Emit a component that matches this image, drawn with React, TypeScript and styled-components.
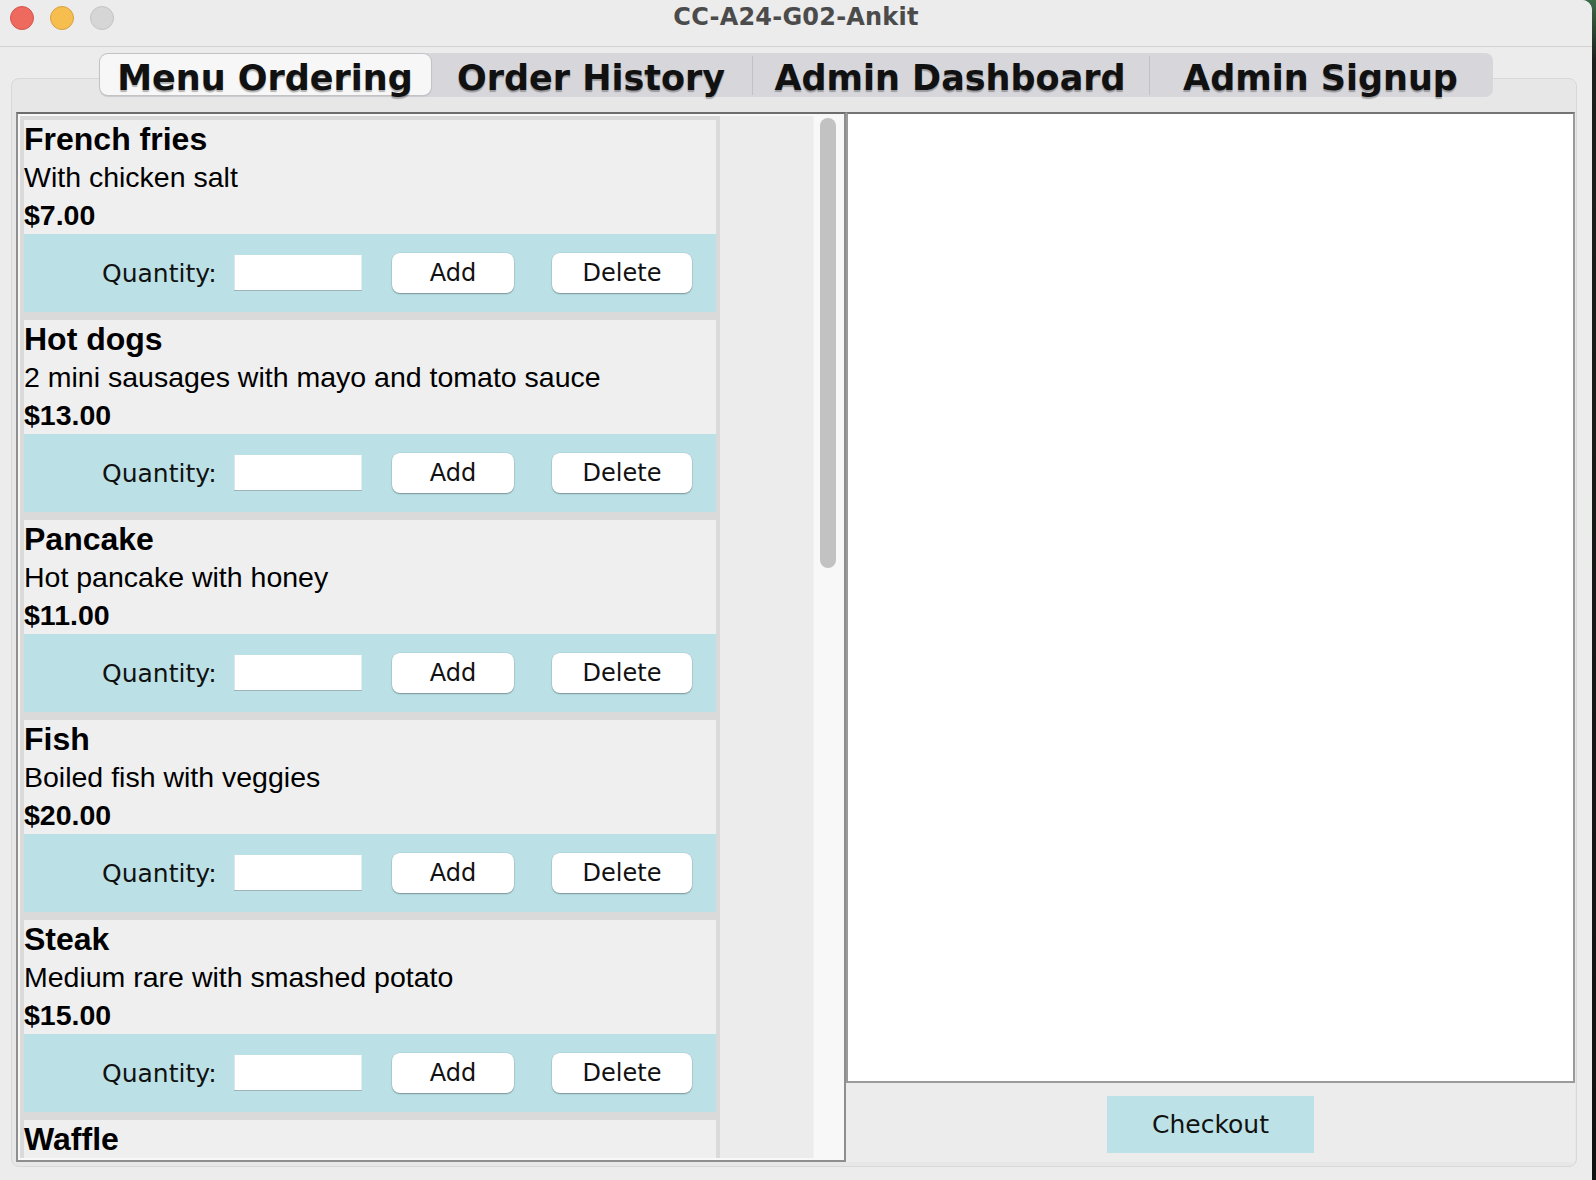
import React from "react";
import styled, { createGlobalStyle } from "styled-components";

const GlobalStyle = createGlobalStyle`
  html, body { margin: 0; padding: 0; }
  body {
    width: 1596px;
    height: 1180px;
    overflow: hidden;
    background: linear-gradient(#3d6a47 0px, #1c1f1c 60px, #111 100%);
  }
  #root { width: 1596px; height: 1180px; }
  * { box-sizing: border-box; }
`;

const Window = styled.div`
  width: 1592px;
  height: 1180px;
  background: #ececec;
  border-top-right-radius: 10px;
  display: flex;
  flex-direction: column;
  overflow: hidden;
`;

const TitleBar = styled.div`
  height: 47px;
  border-bottom: 1px solid #d2d2d2;
  display: grid;
  grid-template-columns: 1fr auto 1fr;
  align-items: start;
  background: #ececec;
`;

const Lights = styled.div`
  display: flex;
  gap: 16px;
  padding: 6px 0 0 10px;
`;

const Light = styled.span<{ $fill: string; $ring: string }>`
  width: 24px;
  height: 24px;
  border-radius: 50%;
  background: ${(p) => p.$fill};
  border: 1px solid ${(p) => p.$ring};
`;

const Title = styled.div`
  font-family: "DejaVu Sans", sans-serif;
  font-weight: 700;
  font-size: 24px;
  line-height: 34px;
  color: #4b4b4b;
  letter-spacing: 0.2px;
`;

const TabStrip = styled.div`
  position: relative;
  z-index: 1;
  margin-top: 6px;
  display: flex;
  justify-content: center;
`;

const TabGroup = styled.div`
  display: flex;
  background: #d6d6db;
  border-radius: 8px;
  padding: 1px 0 2px 0;
`;

const Tab = styled.div<{ $w: number; $active?: boolean; $sep?: boolean }>`
  position: relative;
  width: ${(p) => p.$w}px;
  height: 41px;
  padding-top: 7px;
  text-align: center;
  font-family: "DejaVu Sans", sans-serif;
  font-weight: 700;
  font-size: 35px;
  line-height: 34px;
  color: #111;
  white-space: nowrap;
  text-shadow: 0 2px 1px rgba(0, 0, 0, 0.28);
  border-radius: 8px;
  background: ${(p) => (p.$active ? "#f7f7f7" : "transparent")};
  box-shadow: ${(p) =>
    p.$active ? "0 0 0 1px #c3c3c6, 0 1px 2px rgba(0,0,0,0.18)" : "none"};
  &::before {
    content: "";
    display: ${(p) => (p.$sep ? "block" : "none")};
    position: absolute;
    left: 0;
    top: 2px;
    bottom: 0;
    width: 1px;
    background: #c2c2c6;
  }
`;

const ContentPanel = styled.div`
  margin: -19px 15px 0 11px;
  height: 1089px;
  border: 1px solid #d8d8d8;
  border-radius: 8px;
  background: #e7e7e7;
  padding: 33px 1px 4px 4px;
  display: flex;
`;

const ScrollPane = styled.div`
  width: 830px;
  height: 1050px;
  border: 2px solid #8e8e8e;
  border-top-color: #6d6d6d;
  padding: 2px;
  background: #f8f8f8;
  display: flex;
`;

const Viewport = styled.div`
  flex: 1;
  background: #ececec;
  overflow: hidden;
  display: flex;
  align-items: flex-start;
`;

const ItemList = styled.div`
  width: 700px;
  background: #dadada;
  padding: 4px;
  display: flex;
  flex-direction: column;
  gap: 8px;
`;

const Item = styled.div`
  background: #efefef;
  display: flex;
  flex-direction: column;
  font-family: "Liberation Sans", Arial, sans-serif;
  color: #000;
`;

const ItemName = styled.div`
  font-weight: 700;
  font-size: 32px;
  line-height: 38px;
`;

const ItemDesc = styled.div`
  font-size: 28.5px;
  line-height: 38px;
`;

const ItemPrice = styled.div`
  font-weight: 700;
  font-size: 28.5px;
  line-height: 38px;
`;

const ControlBar = styled.div`
  height: 78px;
  background: #bbe1e6;
  display: flex;
  align-items: center;
  padding-left: 78px;
  font-family: "DejaVu Sans", sans-serif;
  font-size: 24px;
  color: #111;
`;

const QtyLabel = styled.span`
  width: 132px;
  font-size: 25px;
`;

const QtyInput = styled.input`
  width: 128px;
  height: 36px;
  border: 0;
  outline: none;
  background: #fff;
  margin-right: 30px;
  box-shadow: inset 0 -1px 0 #9db5ba, inset 1px 0 0 #dfe6e8, inset -1px 0 0 #e6ecee;
  font-family: "DejaVu Sans", sans-serif;
  font-size: 22px;
  padding: 0 6px;
`;

const PillButton = styled.button<{ $w: number; $ml?: number }>`
  width: ${(p) => p.$w}px;
  height: 40px;
  margin-left: ${(p) => p.$ml ?? 0}px;
  border: 0;
  border-radius: 8px;
  background: #fff;
  box-shadow: 0 1px 1.5px rgba(0, 0, 0, 0.32), 0 0 0 0.5px rgba(0, 0, 0, 0.08);
  font-family: "DejaVu Sans", sans-serif;
  font-size: 24px;
  color: #111;
  padding: 0;
  cursor: default;
`;

const Track = styled.div`
  width: 29px;
  align-self: stretch;
  background: #f8f8f8;
  border-left: 1px solid #f1f1f1;
  padding: 2px 6px 0 6px;
`;

const Thumb = styled.div`
  width: 16px;
  height: 450px;
  border-radius: 8px;
  background: #c2c2c2;
`;

const RightPanel = styled.div`
  flex: 1;
  display: flex;
  flex-direction: column;
`;

const OrderArea = styled.div`
  height: 971px;
  background: #fff;
  border: 2px solid #9b9b9b;
  border-top-color: #747474;
`;

const CheckoutBar = styled.div`
  flex: 1;
  background: #ececec;
  display: flex;
  justify-content: center;
  align-items: flex-start;
  padding-top: 13px;
`;

const CheckoutButton = styled.button`
  width: 207px;
  height: 57px;
  border: 0;
  background: #bce1e6;
  font-family: "DejaVu Sans", sans-serif;
  font-size: 25px;
  color: #111;
  padding: 0;
  cursor: default;
`;

type MenuItem = { name: string; desc?: string; price?: string };

const items: MenuItem[] = [
  { name: "French fries", desc: "With chicken salt", price: "$7.00" },
  { name: "Hot dogs", desc: "2 mini sausages with mayo and tomato sauce", price: "$13.00" },
  { name: "Pancake", desc: "Hot pancake with honey", price: "$11.00" },
  { name: "Fish", desc: "Boiled fish with veggies", price: "$20.00" },
  { name: "Steak", desc: "Medium rare with smashed potato", price: "$15.00" },
  { name: "Waffle" },
];

const tabs = [
  { label: "Menu Ordering", w: 331, active: true, sep: false },
  { label: "Order History", w: 321, active: false, sep: false },
  { label: "Admin Dashboard", w: 397, active: false, sep: true },
  { label: "Admin Signup", w: 344, active: false, sep: true },
];

export default function App() {
  return (
    <>
      <GlobalStyle />
      <Window>
        <TitleBar>
          <Lights>
            <Light $fill="#ee6a5f" $ring="#d5544c" />
            <Light $fill="#f5be4f" $ring="#d9a23f" />
            <Light $fill="#d6d6d6" $ring="#c4c4c4" />
          </Lights>
          <Title>CC-A24-G02-Ankit</Title>
          <div />
        </TitleBar>
        <TabStrip>
          <TabGroup>
            {tabs.map((t) => (
              <Tab key={t.label} $w={t.w} $active={t.active} $sep={t.sep}>
                {t.label}
              </Tab>
            ))}
          </TabGroup>
        </TabStrip>
        <ContentPanel>
          <ScrollPane>
            <Viewport>
              <ItemList>
                {items.map((it) => (
                  <Item key={it.name}>
                    <ItemName>{it.name}</ItemName>
                    {it.desc && <ItemDesc>{it.desc}</ItemDesc>}
                    {it.price && <ItemPrice>{it.price}</ItemPrice>}
                    {it.price && (
                      <ControlBar>
                        <QtyLabel>Quantity:</QtyLabel>
                        <QtyInput readOnly value="" />
                        <PillButton $w={122}>Add</PillButton>
                        <PillButton $w={140} $ml={38}>
                          Delete
                        </PillButton>
                      </ControlBar>
                    )}
                  </Item>
                ))}
              </ItemList>
            </Viewport>
            <Track>
              <Thumb />
            </Track>
          </ScrollPane>
          <RightPanel>
            <OrderArea />
            <CheckoutBar>
              <CheckoutButton>Checkout</CheckoutButton>
            </CheckoutBar>
          </RightPanel>
        </ContentPanel>
      </Window>
    </>
  );
}
